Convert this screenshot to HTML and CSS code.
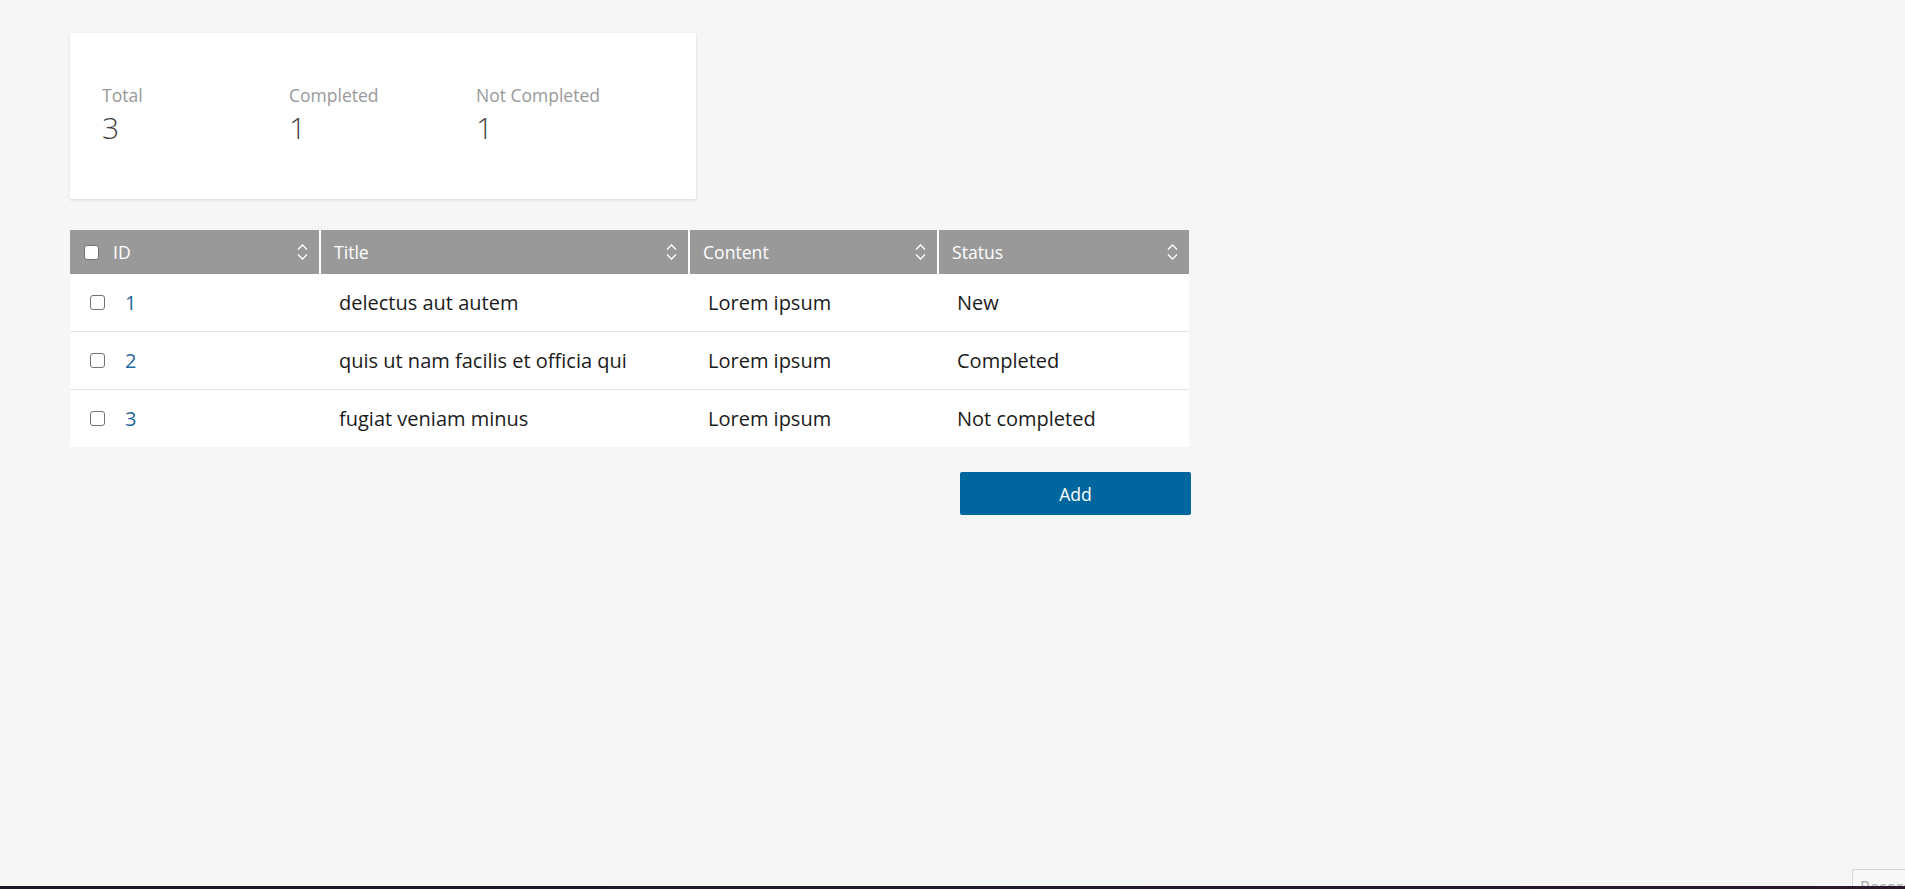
FILE: index.html
```html
<!DOCTYPE html>
<html>
  <head>
    <meta charset="UTF-8" />
    <link rel="stylesheet" href="styles.css">
  </head>

  <body>
    <div class="page">
      <div class="stats-card">
        <div class="stat">
          <div class="stat-label">Total</div>
          <div class="stat-value">3</div>
        </div>
        <div class="stat">
          <div class="stat-label">Completed</div>
          <div class="stat-value">1</div>
        </div>
        <div class="stat">
          <div class="stat-label">Not Completed</div>
          <div class="stat-value">1</div>
        </div>
      </div>

      <table class="todo-table">
        <colgroup>
          <col class="col-id" />
          <col class="col-title" />
          <col class="col-content" />
          <col class="col-status" />
        </colgroup>
        <thead>
          <tr>
            <th>
              <div class="th-inner">
                <span class="th-label"><input type="checkbox" class="check" /> ID</span>
                <svg class="sort" viewBox="0 0 11 18"><polyline points="1,6.5 5.5,2 10,6.5" /><polyline points="1,11.5 5.5,16 10,11.5" /></svg>
              </div>
            </th>
            <th>
              <div class="th-inner">
                <span class="th-label">Title</span>
                <svg class="sort" viewBox="0 0 11 18"><polyline points="1,6.5 5.5,2 10,6.5" /><polyline points="1,11.5 5.5,16 10,11.5" /></svg>
              </div>
            </th>
            <th>
              <div class="th-inner">
                <span class="th-label">Content</span>
                <svg class="sort" viewBox="0 0 11 18"><polyline points="1,6.5 5.5,2 10,6.5" /><polyline points="1,11.5 5.5,16 10,11.5" /></svg>
              </div>
            </th>
            <th>
              <div class="th-inner">
                <span class="th-label">Status</span>
                <svg class="sort" viewBox="0 0 11 18"><polyline points="1,6.5 5.5,2 10,6.5" /><polyline points="1,11.5 5.5,16 10,11.5" /></svg>
              </div>
            </th>
          </tr>
        </thead>
        <tbody>
          <tr>
            <td><span class="id-cell"><input type="checkbox" class="check" /><a href="#">1</a></span></td>
            <td>delectus aut autem</td>
            <td>Lorem ipsum</td>
            <td>New</td>
          </tr>
          <tr>
            <td><span class="id-cell"><input type="checkbox" class="check" /><a href="#">2</a></span></td>
            <td>quis ut nam facilis et officia qui</td>
            <td>Lorem ipsum</td>
            <td>Completed</td>
          </tr>
          <tr>
            <td><span class="id-cell"><input type="checkbox" class="check" /><a href="#">3</a></span></td>
            <td>fugiat veniam minus</td>
            <td>Lorem ipsum</td>
            <td>Not completed</td>
          </tr>
        </tbody>
      </table>

      <div class="actions">
        <button class="btn-add">Add</button>
      </div>
    </div>

    <div class="record-tab">Record</div>
    <div class="taskbar-edge"></div>
  </body>
</html>
```

FILE: styles.css
```css
html,
body {
  margin: 0;
  background: #f6f6f6;
  font-family: "Open Sans", "Liberation Sans", sans-serif;
  color: #1b1b1b;
}

.page {
  padding: 33px 0 0 70px;
  width: 1121px;
}

.stats-card {
  width: 626px;
  box-sizing: border-box;
  background: white;
  box-shadow: 0 1px 3px rgba(0, 0, 0, 0.12);
  padding: 50px 32px 50px;
  display: flex;
}
.stat {
  width: 187px;
}
.stat-label {
  font-size: 17.5px;
  line-height: 24px;
  color: #999;
}
.stat-value {
  font-size: 30px;
  font-weight: 300;
  line-height: 42px;
  color: #444;
}

.todo-table {
  margin-top: 31px;
  width: 1119px;
  table-layout: fixed;
  border-collapse: collapse;
  background: white;
  font-size: 20px;
}
.col-id { width: 250px; }
.col-title { width: 369px; }
.col-content { width: 249px; }
.col-status { width: 251px; }

.todo-table th {
  height: 44px;
  padding: 0 11px 0 13px;
  background: #999;
  color: white;
  font-size: 17.6px;
  font-weight: normal;
  text-align: left;
  border-left: 2px solid white;
}
.todo-table th:first-child {
  border-left: none;
  padding-left: 14px;
}
.th-inner {
  display: flex;
  align-items: center;
  justify-content: space-between;
}
.th-label {
  display: flex;
  align-items: center;
  gap: 14px;
}
.sort {
  width: 11px;
  height: 18px;
  fill: none;
  stroke: white;
  stroke-width: 1.3;
}

.todo-table td {
  height: 57px;
  padding: 0 19px;
  border-bottom: 1px solid #e3e3e3;
}
.todo-table tbody tr:last-child td {
  border-bottom: none;
}
.todo-table td:first-child {
  padding-left: 20px;
}
.id-cell {
  display: flex;
  align-items: center;
  gap: 20px;
}
.id-cell a {
  color: #1f68a0;
  text-decoration: none;
}

.check {
  appearance: none;
  margin: 0;
  width: 15px;
  height: 15px;
  border: 1px solid #7a716b;
  border-radius: 3px;
  background: white;
  box-sizing: border-box;
}

.actions {
  display: flex;
  justify-content: flex-end;
  width: 1121px;
  margin-top: 25px;
}
.btn-add {
  width: 231px;
  height: 43px;
  border: none;
  border-radius: 2px;
  background: #00679e;
  color: white;
  font-family: inherit;
  font-size: 17.6px;
}

.record-tab {
  position: fixed;
  left: 1852px;
  top: 869px;
  width: 70px;
  height: 30px;
  box-sizing: border-box;
  padding: 6px 0 0 7px;
  background: #f8f8f8;
  border: 1px solid #d6d6d6;
  color: #aaa;
  font-size: 16px;
  overflow: hidden;
}
.taskbar-edge {
  position: fixed;
  left: 0;
  right: 0;
  bottom: 0;
  height: 3px;
  background: linear-gradient(to right, #1c1629, #23182d 60%, #2b1a2c);
}
```
